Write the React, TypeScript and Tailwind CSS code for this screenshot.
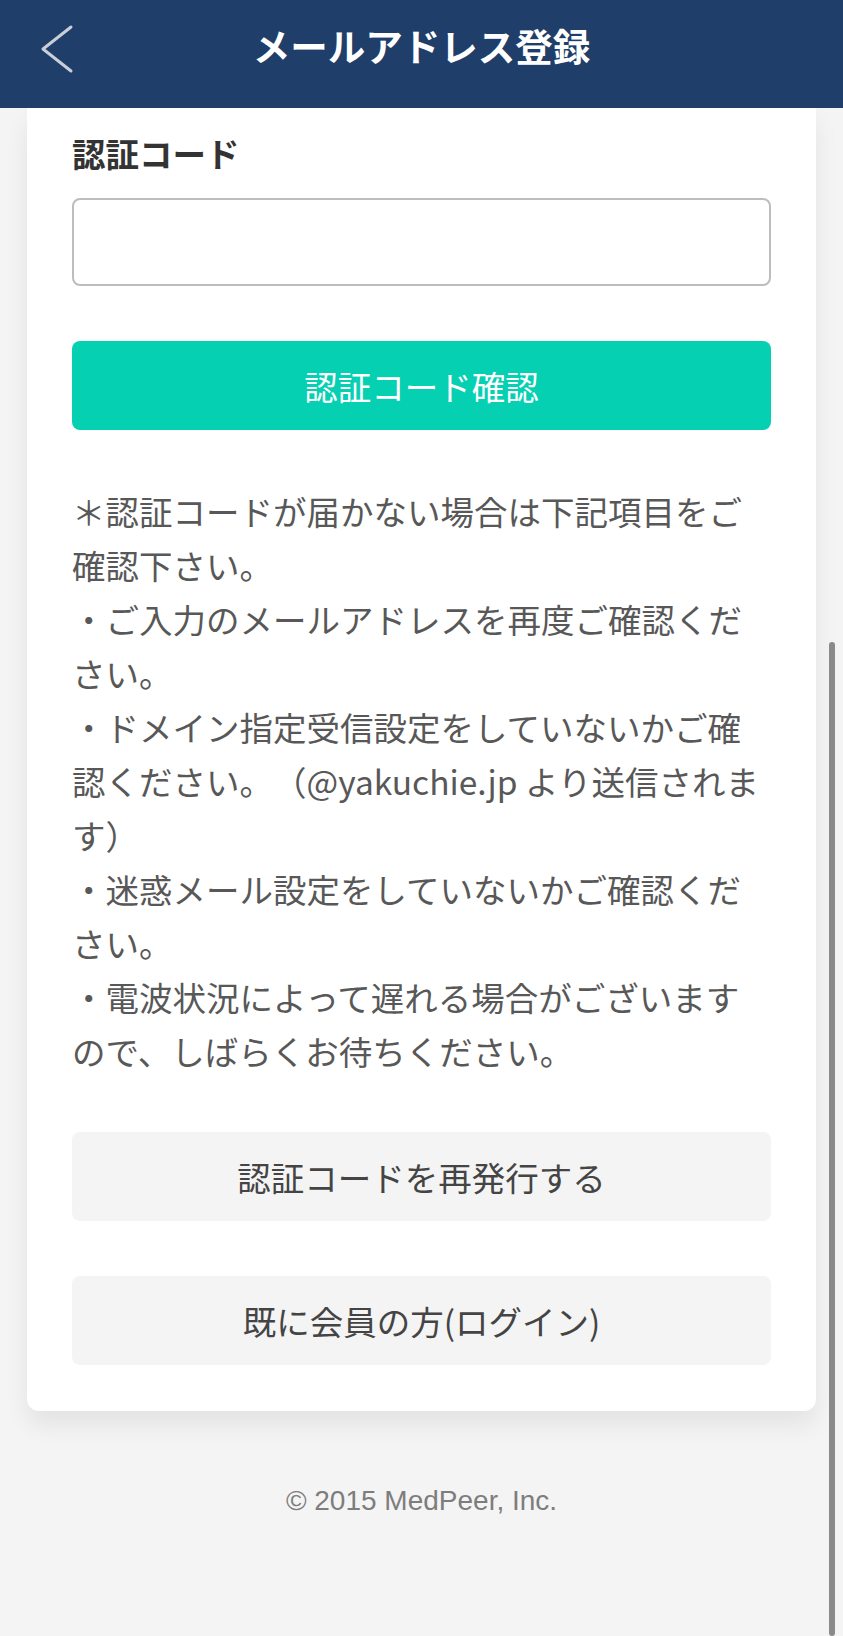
import { useState } from 'react'

const jp = '"Noto Sans CJK JP", "Noto Sans", sans-serif'

export default function App() {
  const [code, setCode] = useState('')

  return (
    <div
      className="relative min-h-[1636px] bg-[#f4f4f4] flex flex-col"
      style={{ fontFamily: jp }}
    >
      <header className="h-[108px] bg-[#1f3e69] flex items-start pt-[20px] relative">
        <button className="absolute left-[38px] top-[24px] w-[40px] h-[50px]">
          <svg width="40" height="50" viewBox="0 0 40 50" fill="none">
            <polyline
              points="33,3 5,25 33,47"
              stroke="#c9ced8"
              strokeWidth="3"
              strokeLinecap="round"
              strokeLinejoin="round"
            />
          </svg>
        </button>
        <h1 className="w-full text-center text-white text-[37.5px] font-bold leading-[50px]">
          メールアドレス登録
        </h1>
      </header>

      <div className="mx-[27px] w-[789px] bg-white rounded-b-[12px] shadow-[0_14px_24px_rgba(0,0,0,0.07)] px-[45px] pt-[25px] pb-[46px]">
        <label className="block text-[33.5px] font-bold leading-[40px] text-[#333]">認証コード</label>
        <input
          value={code}
          onChange={(e) => setCode(e.target.value)}
          className="mt-[25px] block w-full h-[88px] border-2 border-[#bdbdbd] rounded-[8px] px-4 text-[32px] focus:outline-none"
        />
        <button className="mt-[55px] w-full h-[89px] rounded-[8px] bg-[#05d0b1] text-white text-[33.5px] leading-none">
          認証コード確認
        </button>

        <p className="mt-[54px] text-[33.5px] leading-[54px] text-[#585858] break-all [text-spacing-trim:space-all]">
          ＊認証コードが届かない場合は下記項目をご確認下さい。
          <br />
          ・ご入力のメールアドレスを再度ご確認ください。
          <br />
          ・ドメイン指定受信設定をしていないかご確認ください。（@yakuchie.jp より送信されます）
          <br />
          ・迷惑メール設定をしていないかご確認ください。
          <br />
          ・電波状況によって遅れる場合がございますので、しばらくお待ちください。
        </p>

        <button className="mt-[54px] w-full h-[89px] rounded-[8px] bg-[#f4f4f4] text-[#444] text-[33.5px] leading-none">
          認証コードを再発行する
        </button>
        <button className="mt-[55px] w-full h-[89px] rounded-[8px] bg-[#f4f4f4] text-[#444] text-[33.5px] leading-none">
          既に会員の方(ログイン)
        </button>
      </div>

      <footer
        className="mt-[72px] text-center text-[28px] text-[#7d7d7d] leading-[36px]"
        style={{ fontFamily: '"Liberation Sans", Arial, sans-serif' }}
      >
        © 2015 MedPeer, Inc.
      </footer>

      <div className="absolute right-[8px] top-[642px] bottom-0 w-[6px] rounded-full bg-[#8a8a8a]" />
    </div>
  )
}
